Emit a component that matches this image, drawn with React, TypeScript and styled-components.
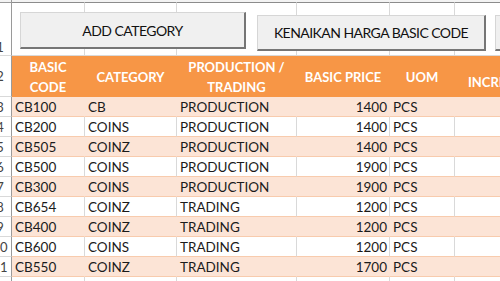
import React from 'react';
import styled, { createGlobalStyle } from 'styled-components';

const Global = createGlobalStyle`
  html, body { margin: 0; padding: 0; background: #ffffff; overflow: hidden; }
  body { font-family: Lato, "Liberation Sans", sans-serif; }
  * { box-sizing: border-box; }
`;

const COLS = '12px 73px 92px 120px 93px 65px 120px';
const GRID = '#d9d9d9';
const PEACH_LINE = '#f8cbad';
const BAND = '#fce4d6';
const ORANGE = '#f79646';

type Kind = 'top' | 'header' | 'band' | 'plain' | 'colhead';

const Sheet = styled.div`
  width: 500px;
  height: 281px;
  overflow: hidden;
  background: #ffffff;
`;

const Row = styled.div<{ $h: number }>`
  position: relative;
  display: grid;
  grid-template-columns: ${COLS};
  height: ${(p) => p.$h}px;
`;

const RowNum = styled.div<{ $kind: Kind; $bottom?: boolean }>`
  overflow: hidden;
  display: flex;
  justify-content: flex-start;
  align-items: ${(p) => (p.$bottom ? 'flex-end' : 'center')};
  border-right: 1px solid #9a9a9a;
  border-bottom: 1px solid ${(p) => (p.$kind === 'colhead' ? '#9a9a9a' : GRID)};
  background: ${(p) => (p.$kind === 'colhead' ? '#f3f3f3' : '#ffffff')};
  font-size: 13px;
  color: #444444;
`;

const NumText = styled.span`
  flex: none;
  display: block;
  transform: translateX(-50%);
`;

const Cell = styled.div<{ $kind: Kind; $align?: 'left' | 'right' | 'center'; $bottom?: boolean }>`
  display: flex;
  align-items: ${(p) => (p.$bottom ? 'flex-end' : 'center')};
  justify-content: ${(p) =>
    p.$align === 'right' ? 'flex-end' : p.$align === 'center' ? 'center' : 'flex-start'};
  text-align: ${(p) => p.$align ?? 'left'};
  overflow: hidden;
  white-space: nowrap;
  padding: ${(p) => (p.$bottom ? '0 0 4px 13px' : p.$align === 'right' ? '1px 2px 0 3px' : '1px 3px 0 3px')};
  background: ${(p) =>
    p.$kind === 'header' ? ORANGE : p.$kind === 'band' ? BAND : p.$kind === 'colhead' ? '#f3f3f3' : '#ffffff'};
  border-right: 1px solid
    ${(p) =>
      p.$kind === 'header' ? ORANGE : p.$kind === 'band' ? BAND : p.$kind === 'colhead' ? '#f3f3f3' : GRID};
  border-bottom: 1px solid
    ${(p) =>
      p.$kind === 'colhead'
        ? '#8c8c8c'
        : p.$kind === 'top'
        ? GRID
        : p.$kind === 'header'
        ? ORANGE
        : PEACH_LINE};
  color: ${(p) => (p.$kind === 'header' ? '#ffffff' : '#1b1b1b')};
  font-size: ${(p) => (p.$kind === 'header' ? '13px' : '13.5px')};
  font-weight: ${(p) => (p.$kind === 'header' ? 700 : 400)};
  line-height: ${(p) => (p.$kind === 'header' ? '20px' : '18px')};
`;

const SheetButton = styled.button<{ $left: number; $top: number; $w: number; $h: number }>`
  position: absolute;
  left: ${(p) => p.$left}px;
  top: ${(p) => p.$top}px;
  width: ${(p) => p.$w}px;
  height: ${(p) => p.$h}px;
  display: flex;
  align-items: center;
  justify-content: center;
  padding: 0;
  background: #f0f0f0;
  border-top: 1px solid #d6d6d6;
  border-left: 1px solid #d6d6d6;
  border-right: 2px solid #767676;
  border-bottom: 2px solid #767676;
  font-family: Lato, "Liberation Sans", sans-serif;
  font-size: 14px;
  letter-spacing: -0.55px;
  color: #111111;
  white-space: nowrap;
  overflow: hidden;
`;

const data = [
  ['CB100', 'CB', 'PRODUCTION', '1400', 'PCS'],
  ['CB200', 'COINS', 'PRODUCTION', '1400', 'PCS'],
  ['CB505', 'COINZ', 'PRODUCTION', '1400', 'PCS'],
  ['CB500', 'COINS', 'PRODUCTION', '1900', 'PCS'],
  ['CB300', 'COINS', 'PRODUCTION', '1900', 'PCS'],
  ['CB654', 'COINZ', 'TRADING', '1200', 'PCS'],
  ['CB400', 'COINZ', 'TRADING', '1200', 'PCS'],
  ['CB600', 'COINS', 'TRADING', '1200', 'PCS'],
  ['CB550', 'COINZ', 'TRADING', '1700', 'PCS'],
];

const EmptyCells: React.FC<{ kind: Kind; n: number }> = ({ kind, n }) => (
  <>
    {Array.from({ length: n }).map((_, i) => (
      <Cell key={i} $kind={kind} />
    ))}
  </>
);

export default function App() {
  return (
    <>
      <Global />
      <Sheet>
        <Row $h={3}>
          <RowNum $kind="colhead" />
          <EmptyCells kind="colhead" n={6} />
        </Row>
        <Row $h={53}>
          <RowNum $kind="top" $bottom>
            <NumText>1</NumText>
          </RowNum>
          <EmptyCells kind="top" n={6} />
          <SheetButton $left={20} $top={9} $w={226} $h={37}>
            ADD CATEGORY
          </SheetButton>
          <SheetButton $left={257} $top={12} $w={229} $h={36}>
            KENAIKAN HARGA BASIC CODE
          </SheetButton>
          <SheetButton $left={495} $top={12} $w={80} $h={36} />
        </Row>
        <Row $h={41}>
          <RowNum $kind="top">
            <NumText>2</NumText>
          </RowNum>
          <Cell $kind="header" $align="center">
            BASIC
            <br />
            CODE
          </Cell>
          <Cell $kind="header" $align="center">
            CATEGORY
          </Cell>
          <Cell $kind="header" $align="center">
            PRODUCTION /
            <br />
            TRADING
          </Cell>
          <Cell $kind="header" $align="center">
            BASIC PRICE
          </Cell>
          <Cell $kind="header" $align="center">
            UOM
          </Cell>
          <Cell $kind="header" $bottom>
            INCREASE
          </Cell>
        </Row>
        {data.map((r, i) => {
          const kind: Kind = i % 2 === 0 ? 'band' : 'plain';
          return (
            <Row $h={20} key={r[0]}>
              <RowNum $kind="plain">
                <NumText>{i + 3}</NumText>
              </RowNum>
              <Cell $kind={kind}>{r[0]}</Cell>
              <Cell $kind={kind}>{r[1]}</Cell>
              <Cell $kind={kind}>{r[2]}</Cell>
              <Cell $kind={kind} $align="right">
                {r[3]}
              </Cell>
              <Cell $kind={kind}>{r[4]}</Cell>
              <Cell $kind={kind} />
            </Row>
          );
        })}
        <Row $h={20}>
          <RowNum $kind="plain">
            <NumText>12</NumText>
          </RowNum>
          <EmptyCells kind="top" n={6} />
        </Row>
      </Sheet>
    </>
  );
}
